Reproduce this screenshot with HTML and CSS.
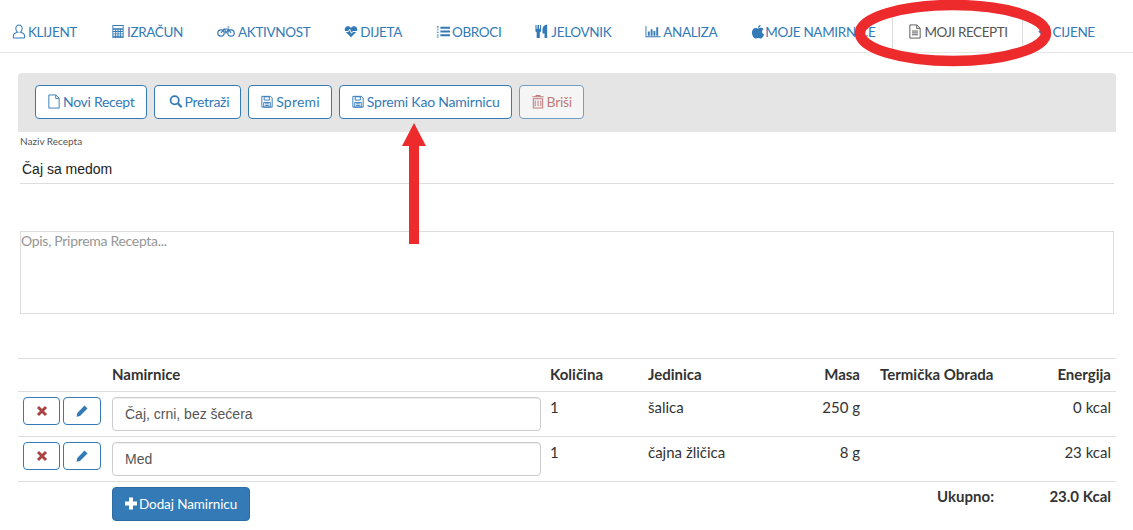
FILE: index.html
```html
<!DOCTYPE html>
<html>
<head>
<meta name="viewport" content="width=device-width, initial-scale=1">
<title>Moji Recepti</title>
<link rel="stylesheet" href="styles.css">
</head>
<body>

<ul class="topnav">
  <li><a href="#"><svg class="ico" viewBox="0 0 14 16"><path d="M7 1C4.9 1 3.600 2.700 3.600 4.800 3.600 6.500 4.400 8 5.500 8.700 3 9.300 1 10.600 1 12.500V14c0 .6.5 1 1 1h10c.5 0 1-.4 1-1v-1.500C13 10.600 11 9.300 8.500 8.700 9.600 8 10.400 6.500 10.400 4.800 10.400 2.700 9.100 1 7 1z" fill="none" stroke="currentColor" stroke-width="1.100"/></svg>KLIJENT</a></li>
  <li><a href="#"><svg class="ico" viewBox="0 0 14 16"><path fill-rule="evenodd" d="M1 1h12v14H1zM2 2v2.500h10V2zM2 6v1.500h2V6zm3 0v1.500h1.500V6zm2.500 0v1.500H9V6zM10 6v1.500h2V6zM2 8.500V10h2V8.500zm3 0V10h1.500V8.500zm2.500 0V10H9V8.500zm2.500 0V10h2V8.500zM2 11v1.500h2V11zm3 0v1.500h1.500V11zm2.500 0v1.500H9V11zM10 11v1.500h2V11zM2 13.500V14h2v-.5zm3 0V14h1.500v-.5zm2.500 0V14H9v-.5zm2.500 0V14h2v-.5z" fill="currentColor"/></svg>IZRAČUN</a></li>
  <li><a href="#"><svg class="ico ico-wide" viewBox="0 0 18 12"><g fill="none" stroke="currentColor" stroke-width="1.200"><circle cx="4" cy="7.500" r="3.200"/><circle cx="14" cy="7.500" r="3.200"/><path d="M4 7.500L7 3.500h4.500L14 7.500M7.500 3.500L9 7.500l2.500-4M10.500 1.500h2"/></g></svg>AKTIVNOST</a></li>
  <li><a href="#"><svg class="ico" viewBox="0 0 16 16"><path d="M8 14.500L1.800 8.300C.2 6.500.6 3.500 2.500 2.500 4.500 1.500 6.800 2 8 4c1.200-2 3.500-2.500 5.500-1.500 1.900 1 2.300 4 .7 5.800z" fill="currentColor"/><path d="M1 8h4l1.500-2.500L8.500 10 10 8h5" fill="none" stroke="#fff" stroke-width="1.100"/></svg>DIJETA</a></li>
  <li><a href="#"><svg class="ico" viewBox="0 0 16 16"><path d="M5 2.500h11v2.300H5zm0 4.300h11v2.300H5zm0 4.400h11v2.300H5zM1 2h2v.8H1zm0 1.500h2v.8H1zm0 1.500h2v.8H1zM1 7h2v.8H1zm0 1.500h2v.8H1zM1 11h2v.8H1zm0 1.500h2v.8H1zm0 1.500h2v.8H1z" fill="currentColor"/></svg>OBROCI</a></li>
  <li><a href="#"><svg class="ico" viewBox="0 0 14 16"><path d="M0 1h1.200v4h1V1h1.600v4h1V1H6v6.500c0 .7-.6 1.200-1.300 1.400V15H1.300V8.900C.6 8.700 0 8.200 0 7.500zM7.500 5.500C7.500 3 9.500 1 12.500.6V15H9.700v-5H7.500z" fill="currentColor"/></svg>JELOVNIK</a></li>
  <li><a href="#"><svg class="ico ico-chart" viewBox="0 0 16 16"><path d="M0 2h1v11h15v1.200H0zM2.500 8h2v4.500h-2zm3-2.500h2v7h-2zm3 2h2v5h-2zm3-4h2v9h-2z" fill="currentColor"/></svg>ANALIZA</a></li>
  <li><a href="#"><svg class="ico ico-apple" viewBox="0 0 14 16"><path d="M9.800 1c0 1.500-1.200 3-2.900 3C6.900 2.500 8.200 1.200 9.800 1zM7 4.800c.9 0 1.700-.7 3-.7 1.100 0 2.200.5 2.900 1.500-2.300 1.400-2 4.400.6 5.500-.7 1.900-2.100 4.400-3.500 4.400-1 0-1.600-.7-2.800-.7-1.200 0-1.800.7-2.800.7C2.500 15.500.5 12 .5 9.100.5 6 2.500 4.200 4.400 4.200c1.100 0 2 .6 2.600.6z" fill="currentColor"/></svg>MOJE NAMIRNICE</a></li>
  <li class="active"><a href="#"><svg class="ico" viewBox="0 0 14 16"><path d="M1.500 1h7.500l3.500 3.500V15h-11zM8.800 1.300v3.400h3.400M3.800 7.500h6.400M3.800 9.500h6.400M3.800 11.500h6.400" fill="none" stroke="currentColor" stroke-width="1"/></svg>MOJI RECEPTI</a></li>
  <li class="last"><a href="#"><svg class="ico" viewBox="0 0 14 16"><path d="M1 8l6-6h6v6l-6 6z" fill="currentColor"/></svg>CIJENE</a></li>
</ul>

<div class="page">
  <div class="toolbar">
    <button class="btn"><svg class="ico" viewBox="0 0 14 16"><path d="M1.500 1h7.500l3.500 3.500V15h-11zM8.800 1.300v3.400h3.400" fill="none" stroke="currentColor" stroke-width="1"/></svg>Novi Recept</button>
    <button class="btn"><svg class="ico ico-search" viewBox="0 0 16 16"><circle cx="6.500" cy="6.500" r="4.700" fill="none" stroke="currentColor" stroke-width="2"/><path d="M10 10l4.500 4.500" stroke="currentColor" stroke-width="2.600"/></svg>Pretraži</button>
    <button class="btn btn-save"><svg class="ico" viewBox="0 0 14 16"><path d="M1.500 2.500h9.300l1.700 1.700v9.800h-11zM4 3v3.500h5.500V3zM3.500 9h7v5h-7zM5 10.500h4M5 12.300h4" fill="none" stroke="currentColor" stroke-width="1"/></svg>Spremi</button>
    <button class="btn btn-long"><svg class="ico" viewBox="0 0 14 16"><path d="M1.500 2.500h9.300l1.700 1.700v9.800h-11zM4 3v3.500h5.500V3zM3.500 9h7v5h-7zM5 10.500h4M5 12.300h4" fill="none" stroke="currentColor" stroke-width="1"/></svg>Spremi Kao Namirnicu</button>
    <button class="btn btn-off"><svg class="ico" viewBox="0 0 14 16"><path d="M2 5h10v10H2zM4 7v6M7 7v6M10 7v6M1 3h12M5 3V1.500h4V3" fill="none" stroke="currentColor" stroke-width="1.100"/></svg>Briši</button>
  </div>

  <div class="recipe">
    <label class="small-label">Naziv Recepta</label>
    <div class="name-field">Čaj sa medom</div>
    <div class="desc-field">Opis, Priprema Recepta...</div>
  </div>

  <table class="items">
    <thead>
      <tr>
        <th class="c-act"></th>
        <th class="c-name">Namirnice</th>
        <th class="c-qty">Količina</th>
        <th class="c-unit">Jedinica</th>
        <th class="c-mass num">Masa</th>
        <th class="c-heat">Termička Obrada</th>
        <th class="num">Energija</th>
      </tr>
    </thead>
    <tbody>
      <tr>
        <td class="act-cell">
          <button class="btn-sm"><svg class="ico-sm" viewBox="0 0 12 12"><path d="M2 2l8 8M10 2l-8 8" stroke="#a94442" stroke-width="3"/></svg></button>
          <button class="btn-sm btn-sm-edit"><svg class="ico-sm" viewBox="0 0 12 12"><path d="M8.500 .5l3 3-7.500 7.500-3.500.8.800-3.800z" fill="#337ab7"/></svg></button>
        </td>
        <td><div class="food">Čaj, crni, bez šećera</div></td>
        <td>1</td>
        <td>šalica</td>
        <td class="c-mass num">250 g</td>
        <td></td>
        <td class="num">0 kcal</td>
      </tr>
      <tr>
        <td class="act-cell">
          <button class="btn-sm"><svg class="ico-sm" viewBox="0 0 12 12"><path d="M2 2l8 8M10 2l-8 8" stroke="#a94442" stroke-width="3"/></svg></button>
          <button class="btn-sm btn-sm-edit"><svg class="ico-sm" viewBox="0 0 12 12"><path d="M8.500 .5l3 3-7.500 7.500-3.500.8.800-3.800z" fill="#337ab7"/></svg></button>
        </td>
        <td><div class="food">Med</div></td>
        <td>1</td>
        <td>čajna žličica</td>
        <td class="c-mass num">8 g</td>
        <td></td>
        <td class="num">23 kcal</td>
      </tr>
    </tbody>
    <tfoot>
      <tr>
        <td></td>
        <td colspan="3"><button class="btn-add"><svg class="ico" viewBox="0 0 14 14"><path d="M5 1h4v4h4v4H9v4H5V9H1V5h4z" fill="currentColor"/></svg>Dodaj Namirnicu</button></td>
        <td colspan="2" class="num total">Ukupno:</td>
        <td class="num total">23.0 Kcal</td>
      </tr>
    </tfoot>
  </table>
</div>

<!-- red marks drawn over the screenshot -->
<svg class="mark mark-ring" viewBox="0 0 200 68"><ellipse cx="100" cy="33" rx="93" ry="28" fill="none" stroke="#ed2a2c" stroke-width="10.500"/></svg>
<svg class="mark mark-arrow" viewBox="0 0 24 122"><path d="M12 0L24 23H17V121H7V23H0z" fill="#ed2a2c"/></svg>

</body>
</html>
```

FILE: styles.css
```css
* {
  box-sizing: border-box;
}

body {
  margin: 0;
  font-family: Lato, "Open Sans", sans-serif;
  font-size: 14px;
  color: #333;
  background: #fff;
  overflow: hidden;
}

/* top menu */
.topnav {
  list-style: none;
  margin: 0;
  padding: 11px 0 0 0;
  height: 53px;
  display: flex;
  border-bottom: 1px solid #e7e7e7;
}

.topnav li {
  height: 41px;
  flex: none;
  border-left: 1px solid transparent;
  border-right: 1px solid transparent;
}

.topnav li:first-child {
  margin-left: -5px;
}

.topnav a {
  display: flex;
  align-items: center;
  height: 41px;
  padding: 0 16px;
  font-size: 13.5px;
  letter-spacing: -.35px;
  color: #337ab7;
  text-decoration: none;
  white-space: nowrap;
}

.topnav .active {
  border-color: #ddd;
}

.topnav .active a {
  padding: 0 14px 0 15px;
  letter-spacing: -.45px;
  color: #555;
}

.topnav .last {
  margin-left: -3px;
}

.ico {
  width: 14px;
  height: 15px;
  margin-right: 2px;
  flex: none;
}

.ico-wide {
  width: 18px;
  margin-right: 3px;
}

.ico-apple {
  margin-right: 0;
}

.ico-chart {
  width: 16px;
}

.page {
  padding: 20px 17px 0 18px;
}

/* buttons row */
.toolbar {
  display: flex;
  gap: 7px;
  height: 59px;
  padding: 12px 17px;
  background: #e5e5e5;
  border-radius: 4px 4px 0 0;
}

.btn {
  display: flex;
  align-items: center;
  height: 34px;
  padding: 0 11px 1px 11px;
  font-family: inherit;
  font-size: 14px;
  letter-spacing: -.3px;
  color: #337ab7;
  background: #fff;
  border: 1px solid #337ab7;
  border-radius: 4px;
}

.btn .ico {
  margin-right: 2px;
}

.btn .ico-search {
  margin-left: 3px;
}

.btn-save {
  letter-spacing: .2px;
}

.btn-long {
  letter-spacing: -.2px;
}

.btn-off {
  color: #a94442;
  opacity: .65;
}

/* name and description */
.recipe {
  padding: 3px 2px 0 2px;
}

.small-label {
  display: block;
  font-size: 10px;
  line-height: 12px;
  color: #555;
}

.name-field {
  height: 37px;
  padding: 12px 0 0 2px;
  font-family: "Liberation Sans", Arial, sans-serif;
  font-size: 14px;
  line-height: 20px;
  color: #222;
  border-bottom: 1px solid #ddd;
}

.desc-field {
  height: 83px;
  margin-top: 47px;
  padding: 0;
  font-size: 14px;
  letter-spacing: -.3px;
  line-height: 18px;
  color: #969696;
  border: 1px solid #ddd;
}

/* ingredients table */
.items {
  width: 1098px;
  margin-top: 44px;
  border-collapse: collapse;
  table-layout: fixed;
  border-top: 1px solid #ddd;
  font-size: 15px;
}

.items th,
.items td {
  padding: 5px;
  text-align: left;
  vertical-align: top;
}

.items th {
  height: 33px;
  font-weight: 700;
  line-height: 20px;
  color: #333;
  border-bottom: 1px solid #ddd;
}

.items tbody td {
  height: 45px;
  line-height: 20px;
  border-bottom: 1px solid #ddd;
}

.c-act { width: 89px; }
.c-name { width: 438px; }
.c-qty { width: 98px; }
.c-unit { width: 127px; }
.c-mass { width: 105px; }
.c-heat { width: 124px; }

.items .num {
  text-align: right;
}

.items .c-mass {
  padding-right: 15px;
}

.items .act-cell {
  white-space: nowrap;
  padding-right: 0;
}

.btn-sm {
  display: inline-flex;
  align-items: center;
  justify-content: center;
  width: 37px;
  height: 28px;
  padding: 0;
  margin-right: -1px;
  vertical-align: top;
  background: #fff;
  border: 1px solid #337ab7;
  border-radius: 4px;
}

.btn-sm-edit {
  width: 38px;
}

.ico-sm {
  width: 12px;
  height: 12px;
}

.food {
  height: 34px;
  margin-right: -1px;
  padding: 5px 12px;
  font-family: "Liberation Sans", Arial, sans-serif;
  font-size: 14px;
  line-height: 22px;
  color: #555;
  background: #fff;
  border: 1px solid #ccc;
  border-radius: 4px;
  box-shadow: inset 0 1px 1px rgba(0,0,0,.075);
}

.btn-add {
  display: inline-flex;
  align-items: center;
  height: 34px;
  padding: 0 12px 1px 11px;
  font-family: inherit;
  font-size: 13.5px;
  letter-spacing: -.1px;
  color: #fff;
  background: #337ab7;
  border: 1px solid #2e6da4;
  border-radius: 4px;
}

.btn-add .ico {
  margin-right: 1px;
}

.items .total {
  padding-top: 4px;
  font-weight: 700;
  line-height: 20px;
}

/* annotation marks */
.mark {
  position: absolute;
}

.mark-ring {
  left: 853px;
  top: 0;
  width: 200px;
  height: 68px;
}

.mark-arrow {
  left: 402px;
  top: 123px;
  width: 24px;
  height: 122px;
}
```
